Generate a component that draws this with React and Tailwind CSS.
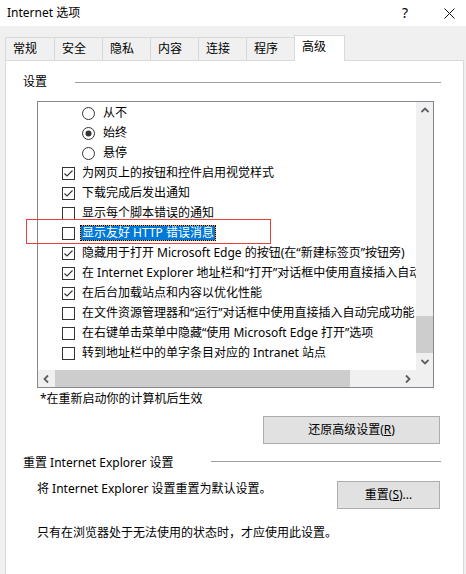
import React from "react";

const FONT = { fontFamily: '"Noto Sans", "Noto Sans CJK SC", sans-serif' };

function Check({ checked }) {
  return (
    <svg width="13" height="13" viewBox="0 0 13 13" className="shrink-0">
      <rect x="0.5" y="0.5" width="12" height="12" fill="#fff" stroke="#333" />
      {checked && (
        <path d="M2.5 6.5 L5 9 L10.5 3.5" fill="none" stroke="#333" strokeWidth="1.1" />
      )}
    </svg>
  );
}

function Radio({ checked }) {
  return (
    <svg width="13" height="13" viewBox="0 0 13 13" className="shrink-0">
      <circle cx="6.5" cy="6.5" r="6" fill="#fff" stroke="#333" />
      {checked && <circle cx="6.5" cy="6.5" r="3" fill="#333" />}
    </svg>
  );
}

function Arrow({ dir }) {
  const paths = {
    up: "M1.5 6 L5 2.5 L8.5 6",
    down: "M1.5 3 L5 6.5 L8.5 3",
    left: "M6 1.5 L2.5 5 L6 8.5",
    right: "M3 1.5 L6.5 5 L3 8.5",
  };
  return (
    <svg width="10" height="10" viewBox="0 0 10 10">
      <path d={paths[dir]} fill="none" stroke="#606060" strokeWidth="1.8" />
    </svg>
  );
}

const rows = [
  { t: "radio", c: false, label: "从不" },
  { t: "radio", c: true, label: "始终" },
  { t: "radio", c: false, label: "悬停" },
  { t: "check", c: true, label: "为网页上的按钮和控件启用视觉样式" },
  { t: "check", c: true, label: "下载完成后发出通知" },
  { t: "check", c: false, label: "显示每个脚本错误的通知" },
  { t: "check", c: false, label: "显示友好 HTTP 错误消息", sel: true },
  { t: "check", c: true, label: "隐藏用于打开 Microsoft Edge 的按钮(在“新建标签页”按钮旁)" },
  { t: "check", c: true, label: "在 Internet Explorer 地址栏和“打开”对话框中使用直接插入自动完成功能" },
  { t: "check", c: true, label: "在后台加载站点和内容以优化性能" },
  { t: "check", c: false, label: "在文件资源管理器和“运行”对话框中使用直接插入自动完成功能" },
  { t: "check", c: false, label: "在右键单击菜单中隐藏“使用 Microsoft Edge 打开”选项" },
  { t: "check", c: false, label: "转到地址栏中的单字条目对应的 Intranet 站点" },
];

const tabs = ["常规", "安全", "隐私", "内容", "连接", "程序"];

export default function App() {
  return (
    <div
      className="relative w-[466px] h-[574px] bg-[#f0f0f0] overflow-hidden text-[12px] leading-[16px] text-black flex flex-col"
      style={FONT}
    >
      {/* Title bar */}
      <div className="h-[26px] bg-white flex items-center shrink-0">
        <span className="pl-[7px] flex-1">Internet 选项</span>
        <span className="text-[14px] w-[20px] text-center mr-[29px]">?</span>
        <svg width="11" height="11" viewBox="0 0 11 11" className="mr-[11px]">
          <path d="M0.5 0.5 L10.5 10.5 M10.5 0.5 L0.5 10.5" stroke="#111" strokeWidth="1" />
        </svg>
      </div>

      {/* Tabs */}
      <div className="flex items-end pl-[5px] pt-[9px] shrink-0">
        {tabs.map((t, i) => (
          <div
            key={t}
            className={
              "h-[23px] border-t border-l border-[#d9d9d9] bg-[#f0f0f0] pl-[7px] flex items-center " +
              (i === 0 ? "w-[49px]" : "w-[48px]")
            }
          >
            {t}
          </div>
        ))}
        <div className="relative z-10 -mb-px h-[26px] w-[51px] border-t border-l border-r border-[#d9d9d9] bg-white pl-[7px] pb-[4px] flex items-center">
          高级
        </div>
      </div>

      {/* Panel */}
      <div className="ml-[5px] w-[459px] flex-1 border border-b-0 border-[#d9d9d9] bg-white flex flex-col">
        <div className="mt-[13px] flex items-center justify-between pl-[17px] pr-[22px]">
          <span>设置</span>
          <div className="w-[366px] h-px bg-[#a0a0a0]" />
        </div>

        {/* Listbox */}
        <div className="mt-[11px] ml-[31px] w-[397px] h-[287px] border border-[#828790] flex flex-col">
          <div className="flex flex-1 min-h-0">
            <div className="flex-1 overflow-hidden pt-px">
              {rows.map((r, i) => (
                <div
                  key={i}
                  className={
                    "h-[20px] flex items-center whitespace-nowrap " +
                    (r.t === "radio" ? "pl-[44px] gap-[6px]" : "pl-[24px] gap-[5px]")
                  }
                >
                  {r.t === "radio" ? <Radio checked={r.c} /> : <Check checked={r.c} />}
                  {r.sel ? (
                    <span className="bg-[#f4a53c] inline-block">
                      <span className="block border border-dotted border-black bg-clip-padding bg-[#0078d7] text-white px-px leading-[14px]">
                        {r.label}
                      </span>
                    </span>
                  ) : (
                    <span className="pl-[2px]">{r.label}</span>
                  )}
                </div>
              ))}
            </div>
            <div className="w-[17px] bg-[#f0f0f0] flex flex-col">
              <div className="h-[17px] flex items-center justify-center">
                <Arrow dir="up" />
              </div>
              <div className="flex-1 flex flex-col justify-end">
                <div className="h-[37px] bg-[#cdcdcd]" />
              </div>
              <div className="h-[17px] flex items-center justify-center">
                <Arrow dir="down" />
              </div>
            </div>
          </div>
          <div className="h-[17px] flex bg-[#f0f0f0] shrink-0">
            <div className="w-[17px] flex items-center justify-center">
              <Arrow dir="left" />
            </div>
            <div className="flex-1 flex">
              <div className="w-[295px] bg-[#cdcdcd]" />
            </div>
            <div className="w-[17px] flex items-center justify-center">
              <Arrow dir="right" />
            </div>
            <div className="w-[17px]" />
          </div>
        </div>

        <div className="mt-[3px] ml-[34px]">*在重新启动你的计算机后生效</div>

        <div className="mt-[9px] self-end mr-[23px] w-[177px] h-[28px] bg-[#e1e1e1] border border-[#adadad] flex items-center justify-center">
          <span>
            还原高级设置(<span className="underline">R</span>)
          </span>
        </div>

        <div className="mt-[11px] flex items-center justify-between pl-[17px] pr-[22px]">
          <span>重置 Internet Explorer 设置</span>
          <div className="w-[230px] h-px bg-[#a0a0a0] -mt-[4px]" />
        </div>

        <div className="mt-[10px] flex items-start justify-between pl-[31px] pr-[23px]">
          <span>将 Internet Explorer 设置重置为默认设置。</span>
          <div className="w-[103px] h-[28px] bg-[#e1e1e1] border border-[#adadad] flex items-center justify-center">
            <span>
              重置(<span className="underline">S</span>)...
            </span>
          </div>
        </div>

        <div className="mt-[16px] pl-[31px]">只有在浏览器处于无法使用的状态时，才应使用此设置。</div>
      </div>

      {/* Red highlight annotation */}
      <div className="absolute left-[26px] top-[219px] w-[245px] h-[25px] border border-[#e84040] pointer-events-none" />
    </div>
  );
}
